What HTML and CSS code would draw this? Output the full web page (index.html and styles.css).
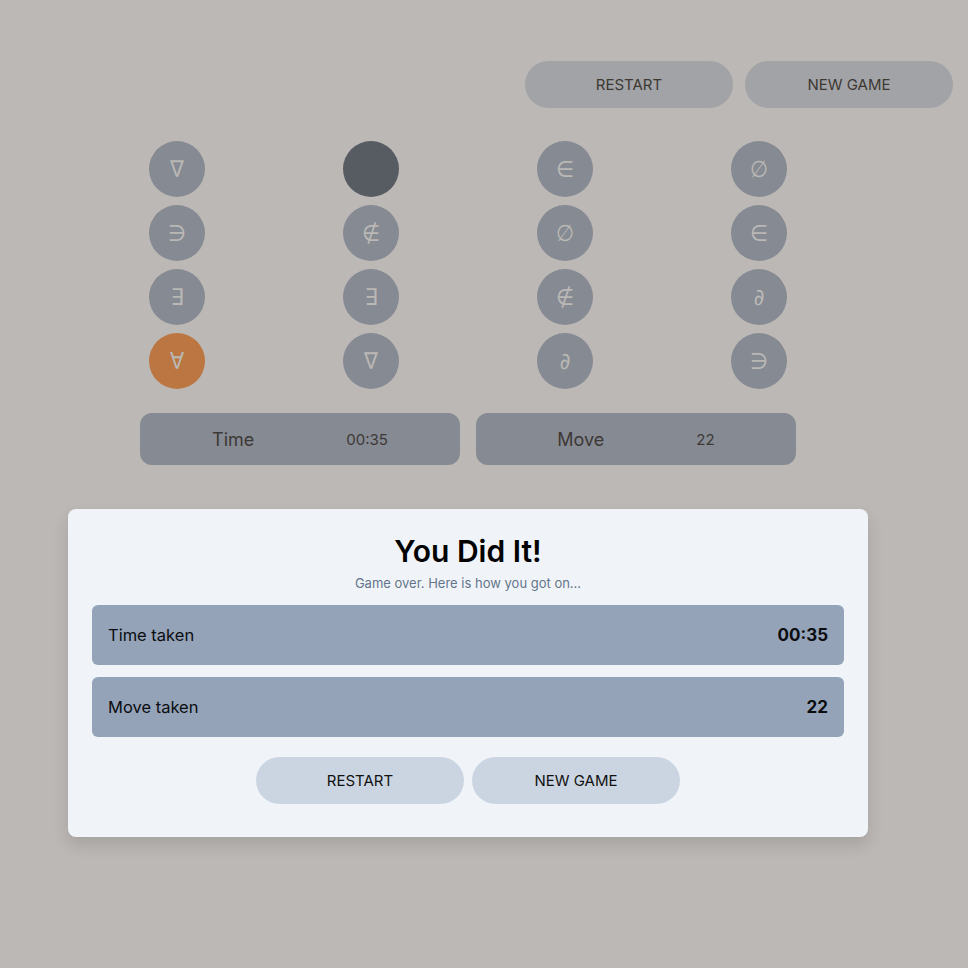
FILE: index.html
```html
<!DOCTYPE html>
<html lang="en">
<head>
<meta charset="utf-8">
<title>Memory</title>
<link rel="stylesheet" href="styles.css">
</head>
<body>
<div class="page">
  <header class="top-actions">
    <button class="pill pill-dim">RESTART</button>
    <button class="pill pill-dim">NEW GAME</button>
  </header>

  <section class="board">
    <div class="grid">
      <div class="tile">∇</div>
      <div class="tile tile-active"></div>
      <div class="tile">∈</div>
      <div class="tile">∅</div>

      <div class="tile">∋</div>
      <div class="tile">∉</div>
      <div class="tile">∅</div>
      <div class="tile">∈</div>

      <div class="tile">∃</div>
      <div class="tile">∃</div>
      <div class="tile">∉</div>
      <div class="tile">∂</div>

      <div class="tile tile-matched">∀</div>
      <div class="tile">∇</div>
      <div class="tile">∂</div>
      <div class="tile">∋</div>
    </div>

    <div class="stats">
      <div class="stat"><span class="stat-label">Time</span><span class="stat-value">00:35</span></div>
      <div class="stat"><span class="stat-label">Move</span><span class="stat-value">22</span></div>
    </div>
  </section>

  <div class="modal">
    <h1 class="modal-title">You Did It!</h1>
    <p class="modal-sub">Game over. Here is how you got on...</p>
    <div class="result"><span class="result-label">Time taken</span><span class="result-value">00:35</span></div>
    <div class="result"><span class="result-label">Move taken</span><span class="result-value">22</span></div>
    <div class="modal-actions">
      <button class="pill pill-light">RESTART</button>
      <button class="pill pill-light">NEW GAME</button>
    </div>
  </div>
</div>
</body>
</html>
```
FILE: styles.css
```css
* { box-sizing: border-box; }

html, body {
  margin: 0;
  padding: 0;
  background: #bcb8b5;
  font-family: "Inter", "Lato", "DejaVu Sans", sans-serif;
}

.page {
  width: 968px;
  min-height: 968px;
  padding-top: 61px;
}

.top-actions {
  display: flex;
  justify-content: flex-end;
  gap: 12px;
  padding-right: 15px;
}

.pill {
  width: 208px;
  height: 47px;
  border: none;
  border-radius: 24px;
  font-family: inherit;
  font-size: 15px;
  letter-spacing: 0;
  padding: 0;
}

.pill-dim {
  background: #a2a3a7;
  color: #3d3832;
}

.board {
  margin-left: 140px;
  width: 656px;
  margin-top: 33px;
}

.grid {
  display: grid;
  grid-template-columns: repeat(4, 56px);
  column-gap: 138px;
  row-gap: 8px;
  padding: 0 9px;
}

.tile {
  width: 56px;
  height: 56px;
  border-radius: 50%;
  background: #868a93;
  color: #bab8b5;
  display: flex;
  align-items: center;
  justify-content: center;
  font-family: "DejaVu Sans", sans-serif;
  font-stretch: condensed;
  font-size: 23px;
}

.tile-active { background: #575b62; }
.tile-matched { background: #bb7641; }

.stats {
  display: flex;
  gap: 16px;
  margin-top: 24px;
}

.stat {
  flex: 1;
  height: 52px;
  border-radius: 12px;
  background: #868a93;
  color: #3d3936;
  display: flex;
  align-items: center;
  justify-content: center;
  gap: 92px;
}

.stat-label { font-size: 18px; }
.stat-value { font-size: 15px; }

.modal {
  margin: 44px 0 0 68px;
  width: 800px;
  background: #f0f4f8;
  border-radius: 8px;
  box-shadow: 0 8px 16px rgba(0, 0, 0, 0.12);
  padding: 24px 24px 33px;
}

.modal-title {
  margin: 0;
  text-align: center;
  font-size: 30px;
  font-weight: 600;
  line-height: 36px;
  color: #020202;
}

.modal-sub {
  margin: 6px 0 14px;
  text-align: center;
  font-size: 13px;
  line-height: 16px;
  color: #64748b;
}

.result {
  height: 60px;
  border-radius: 6px;
  background: #94a3b8;
  display: flex;
  align-items: center;
  justify-content: space-between;
  padding: 0 16px;
  margin-bottom: 12px;
  color: #0b0d10;
}

.result-label { font-size: 16.5px; }
.result-value { font-size: 17px; font-weight: 700; }

.modal-actions {
  display: flex;
  justify-content: center;
  gap: 8px;
  margin-top: 20px;
}

.pill-light {
  background: #cbd5e1;
  color: #111;
}
```
